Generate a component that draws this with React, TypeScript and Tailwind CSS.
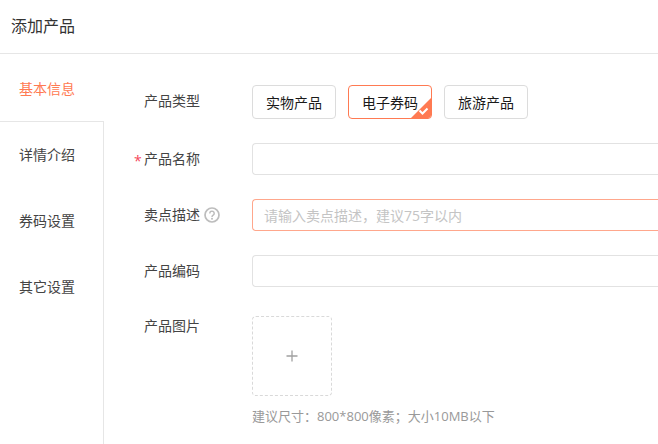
const font = { fontFamily: '"Open Sans", "Noto Sans CJK SC", sans-serif' };

function Label({ children, required, className = "" }: { children: React.ReactNode; required?: boolean; className?: string }) {
  return (
    <div className={`w-[108px] shrink-0 flex items-center text-[14px] leading-[20px] text-[#444] ${className}`}>
      <span className="relative">
        {required && <span className="absolute left-[-10px] top-[2px] text-[#f5475b] text-[14px]">*</span>}
        {children}
      </span>
    </div>
  );
}

function Option({ text, active }: { text: string; active?: boolean }) {
  return (
    <div
      className={`relative w-[84px] h-[34px] flex items-center justify-center rounded-[4px] border text-[14px] text-[#1a1a1a] overflow-hidden ${
        active ? "border-[#ff7a52]" : "border-[#dcdcdc]"
      }`}
    >
      {text}
      {active && (
        <svg className="absolute right-0 bottom-0" width="20" height="20" viewBox="0 0 20 20">
          <path d="M20 0V20H0Z" fill="#ff7a52" />
          <path d="M8.5 12.5l3 3 5-5" fill="none" stroke="#fff" strokeWidth="2" />
        </svg>
      )}
    </div>
  );
}

function Input({ focus, placeholder }: { focus?: boolean; placeholder?: string }) {
  return (
    <div
      className={`flex-1 h-[32px] rounded-l-[4px] border border-r-0 px-[11px] flex items-center text-[14px] text-[#c4c4c4] ${
        focus ? "border-[#ffa78c]" : "border-[#e2e2e2]"
      }`}
    >
      {placeholder}
    </div>
  );
}

export default function App() {
  return (
    <div className="w-[658px] h-[444px] bg-white overflow-hidden flex flex-col" style={font}>
      <div className="h-[54px] shrink-0 border-b border-[#e6e6e6] pl-[11px] pb-[2px] flex items-center text-[16px] text-[#333]">
        添加产品
      </div>
      <div className="flex flex-1 min-h-0">
        <div className="w-[104px] shrink-0 flex flex-col text-[14px] text-[#444]">
          <div className="h-[68px] pl-[19px] pt-[2px] flex items-center text-[#ff7a52] border-b border-[#e6e6e6]">基本信息</div>
          <div className="flex-1 border-r border-[#e6e6e6] flex flex-col">
            <div className="h-[66px] pl-[19px] pb-[2px] flex items-center">详情介绍</div>
            <div className="h-[66px] pl-[19px] pb-[2px] flex items-center">券码设置</div>
            <div className="h-[66px] pl-[19px] pb-[2px] flex items-center">其它设置</div>
          </div>
        </div>
        <div className="flex-1 min-w-0 pl-[40px] pt-[31px] flex flex-col">
          <div className="flex h-[34px]">
            <Label className="h-[32px]">产品类型</Label>
            <div className="flex gap-[12px]">
              <Option text="实物产品" />
              <Option text="电子券码" active />
              <Option text="旅游产品" />
            </div>
          </div>
          <div className="flex mt-[24px] items-center">
            <Label required className="pb-[1px]">产品名称</Label>
            <Input />
          </div>
          <div className="flex mt-[24px] items-center">
            <Label className="pb-[1px]">
              <span className="flex items-center gap-[4px]">
                卖点描述
                <svg width="16" height="16" viewBox="0 0 16 16">
                  <circle cx="8" cy="8" r="7" fill="none" stroke="#bdbdbd" strokeWidth="1.7" />
                  <path d="M5.8 6.4a2.2 2.2 0 1 1 3.4 1.8c-.8.5-1.2.8-1.2 1.7" fill="none" stroke="#bdbdbd" strokeWidth="1.5" />
                  <circle cx="8" cy="11.8" r="1" fill="#bdbdbd" />
                </svg>
              </span>
            </Label>
            <Input focus placeholder="请输入卖点描述，建议75字以内" />
          </div>
          <div className="flex mt-[24px] items-center">
            <Label className="pb-[1px]">产品编码</Label>
            <Input />
          </div>
          <div className="flex mt-[29px]">
            <Label className="items-start h-[20px]">产品图片</Label>
            <div className="flex flex-col">
              <div className="w-[80px] h-[80px] rounded-[4px] border border-dashed border-[#d9d9d9] flex items-center justify-center">
                <svg width="12" height="12" viewBox="0 0 12 12">
                  <path d="M6 0.5V11.5M0.5 6H11.5" stroke="#a0a0a0" strokeWidth="1.3" />
                </svg>
              </div>
              <div className="mt-[10px] text-[13px] leading-[20px] text-[#999] whitespace-nowrap">建议尺寸：800*800像素；大小10MB以下</div>
            </div>
          </div>
        </div>
      </div>
    </div>
  );
}
